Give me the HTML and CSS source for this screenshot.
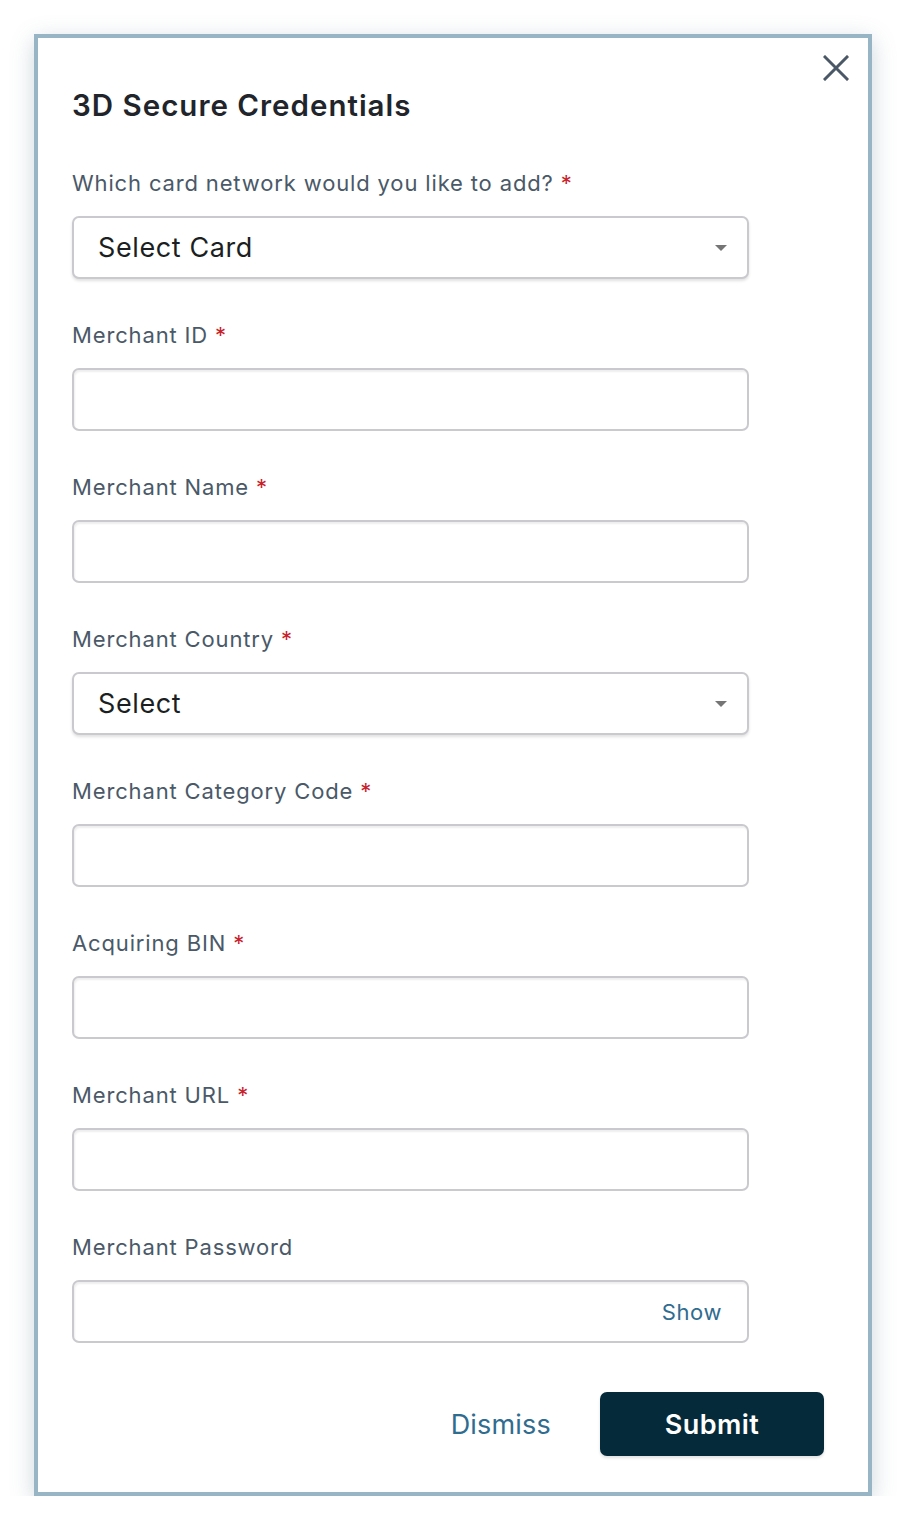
FILE: index.html
```html
<!DOCTYPE html>
<html lang="en">
<head>
<meta charset="utf-8">
<title>3D Secure Credentials</title>
<link rel="stylesheet" href="styles.css">
</head>
<body>
<div class="modal">
  <button class="close" aria-label="Close">
    <svg width="26" height="26" viewBox="0 0 26 26"><path d="M2 2 L24 24 M24 2 L2 24" stroke="#4a5766" stroke-width="3" stroke-linecap="square" fill="none"/></svg>
  </button>
  <h1 class="title">3D Secure Credentials</h1>

  <div class="field">
    <label class="label">Which card network would you like to add? <span class="req">*</span></label>
    <div class="select"><span>Select Card</span><span class="caret"></span></div>
  </div>
  <div class="field">
    <label class="label">Merchant ID <span class="req">*</span></label>
    <div class="input"></div>
  </div>
  <div class="field">
    <label class="label">Merchant Name <span class="req">*</span></label>
    <div class="input"></div>
  </div>
  <div class="field">
    <label class="label">Merchant Country <span class="req">*</span></label>
    <div class="select"><span>Select</span><span class="caret"></span></div>
  </div>
  <div class="field">
    <label class="label">Merchant Category Code <span class="req">*</span></label>
    <div class="input"></div>
  </div>
  <div class="field">
    <label class="label">Acquiring BIN <span class="req">*</span></label>
    <div class="input"></div>
  </div>
  <div class="field">
    <label class="label">Merchant URL <span class="req">*</span></label>
    <div class="input"></div>
  </div>
  <div class="field">
    <label class="label">Merchant Password</label>
    <div class="input pw"><span class="show">Show</span></div>
  </div>

  <div class="actions">
    <button class="dismiss">Dismiss</button>
    <button class="submit">Submit</button>
  </div>
</div>
</body>
</html>
```
FILE: styles.css
```css
* { box-sizing: border-box; }
html, body { margin: 0; padding: 0; background: #ffffff; }
body { font-family: Inter, "Noto Sans", "Liberation Sans", sans-serif; }

.modal {
  position: relative;
  margin: 34px 0 0 34px;
  width: 838px;
  height: 1462px;
  border: 4px solid #98b5c5;
  background: #fff;
  box-shadow: 0 6px 22px rgba(80, 110, 130, 0.28);
  padding: 49px 0 0 34px;
}

.close {
  position: absolute;
  top: 17px;
  right: 19px;
  width: 26px;
  height: 26px;
  padding: 0;
  border: 0;
  background: none;
  display: block;
}
.close svg { display: block; }

.title {
  margin: 0 0 46px 0;
  font-size: 29.5px;
  line-height: 36px;
  font-weight: 600;
  color: #1f252b;
  letter-spacing: 1px;
}

.field { margin-bottom: 42px; width: 677px; }
.label {
  display: block;
  margin: 0 0 19px 0;
  font-size: 22px;
  line-height: 28px;
  color: #4a5968;
  font-weight: 400;
  letter-spacing: 0.85px;
}
.req { color: #c8202a; margin-left: 0; }

.input, .select {
  height: 63px;
  border: 2px solid #cacace;
  border-radius: 7px;
  background: #fff;
}
.input { box-shadow: inset 1px 2px 2px rgba(0,0,0,0.07); }
.select {
  display: flex;
  align-items: center;
  justify-content: space-between;
  padding: 0 20px 0 24px;
  box-shadow: 0 2px 3px rgba(0,0,0,0.12);
  font-size: 27px;
  letter-spacing: 0.6px;
  color: #1c1f22;
}
.caret {
  width: 0; height: 0;
  border-left: 6px solid transparent;
  border-right: 6px solid transparent;
  border-top: 6px solid #757575;
}
.pw { display: flex; align-items: center; justify-content: flex-end; padding-right: 25px; }
.show { font-size: 22px; letter-spacing: 0.6px; color: #2f6c8f; }

.actions {
  display: flex;
  justify-content: flex-end;
  align-items: center;
  gap: 49px;
  margin-top: 49px;
  padding-right: 44px;
}
.dismiss {
  border: 0; background: none; padding: 0;
  font-family: inherit;
  font-size: 27px;
  letter-spacing: 0.2px;
  color: #2f6c8f;
}
.submit {
  width: 224px;
  height: 64px;
  border: 0;
  border-radius: 7px;
  background: #052a3a;
  color: #fff;
  font-family: inherit;
  font-size: 27px;
  letter-spacing: 0.4px;
  font-weight: 600;
  box-shadow: 0 2px 3px rgba(0,0,0,0.12);
}
```
